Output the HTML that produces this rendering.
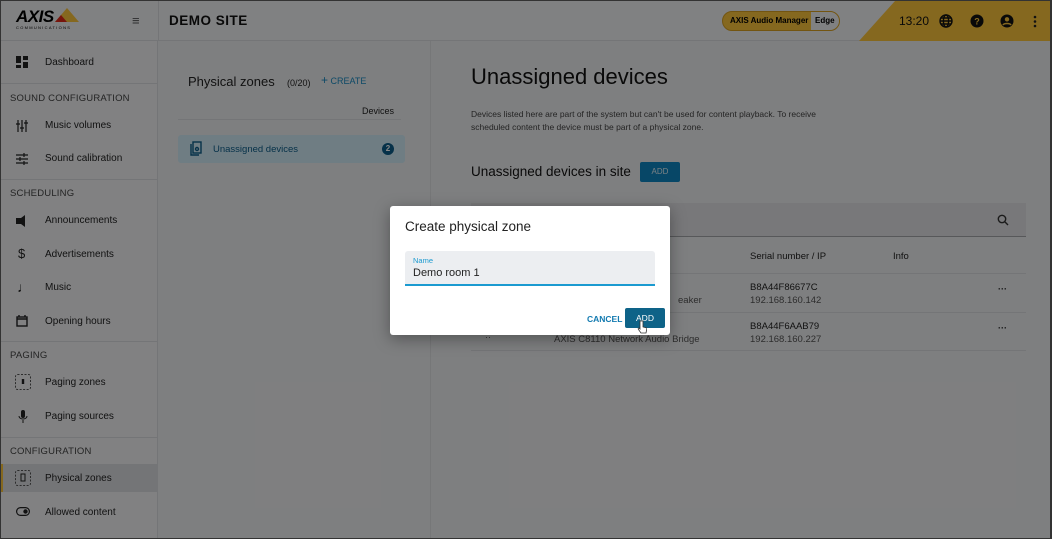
<!DOCTYPE html>
<html><head><meta charset="utf-8"><style>
*{box-sizing:border-box;margin:0;padding:0}
body{width:1052px;height:539px;overflow:hidden;background:#333;font-family:"Liberation Sans",sans-serif;color:#222;position:relative}
.a{position:absolute}
#app{position:absolute;left:1px;top:1px;width:1049px;height:537px;background:#eff0f2;overflow:hidden}
.hl{height:1px;background:#dcdde0}
.it{left:44px;font-size:10px;color:#222}
.sec{left:9px;font-size:9.5px;color:#444;letter-spacing:.2px}
.ic{left:15px;width:12px;height:12px}
#ov{position:absolute;left:0;top:0;width:1049px;height:537px;background:rgba(0,0,0,.47)}
</style></head><body>
<div id="app">
<!-- header -->
<div class="a" style="left:0;top:0;width:1049px;height:40px;background:#f2f3f5;border-bottom:1px solid #dcdde0"></div>
<svg class="a" style="left:858px;top:0" width="191" height="40"><polygon points="36,0 191,0 191,40 0,40" fill="#fcc53c"/></svg>
<div class="a" style="left:15px;top:6px;font-weight:bold;font-size:17px;font-style:italic;letter-spacing:-.5px;color:#000">AXIS</div>
<svg class="a" style="left:54px;top:7px" width="24" height="14"><polygon points="12,0 24,14 0,14" fill="#fcc53c"/><polygon points="6,7 12,14 0,14" fill="#e0281a"/></svg>
<div class="a" style="left:15px;top:24px;font-size:4px;letter-spacing:1.3px;color:#000">COMMUNICATIONS</div>
<div class="a" style="left:131px;top:12px;font-size:13px;color:#555">≡</div>
<div class="a" style="left:157px;top:0;width:1px;height:40px;background:#dcdde0"></div>
<div class="a" style="left:168px;top:12px;font-weight:bold;font-size:13.5px;letter-spacing:.5px;color:#111">DEMO SITE</div>
<div class="a" style="left:721px;top:10px;width:118px;height:20px;border-radius:10px;background:#fcc53c;border:1px solid #d9a020;overflow:hidden">
<div class="a" style="left:7px;top:4px;font-size:8px;font-weight:bold;color:#000">AXIS Audio Manager</div>
<div class="a" style="left:88px;top:0;width:30px;height:20px;background:#f2f3f5"></div>
<div class="a" style="left:92px;top:4px;font-size:8px;font-weight:bold;color:#000">Edge</div></div>
<div class="a" style="left:898px;top:13px;font-size:12px;color:#111">13:20</div>
<svg class="a" style="left:938px;top:13px" width="14" height="14" fill="none" stroke="#111" stroke-width="1.4"><circle cx="7" cy="7" r="6"/><ellipse cx="7" cy="7" rx="2.6" ry="6"/><path d="M1 7h12M2 4h10M2 10h10"/></svg>
<svg class="a" style="left:969px;top:13px" width="14" height="14"><circle cx="7" cy="7" r="6.5" fill="#111"/><text x="7" y="10.5" font-size="9" font-weight="bold" text-anchor="middle" fill="#fcc53c" font-family="Liberation Sans">?</text></svg>
<svg class="a" style="left:999px;top:13px" width="14" height="14"><circle cx="7" cy="7" r="6.5" fill="#111"/><circle cx="7" cy="5.3" r="2.2" fill="#fcc53c"/><path d="M3 11c1-2 7-2 8 0" stroke="#fcc53c" stroke-width="1.6" fill="none"/></svg>
<svg class="a" style="left:1032px;top:14px" width="4" height="13" fill="#222"><circle cx="2" cy="2" r="1.3"/><circle cx="2" cy="6.5" r="1.3"/><circle cx="2" cy="11" r="1.3"/></svg>

<!-- sidebar -->
<div class="a" style="left:0;top:40px;width:157px;height:497px;background:#f3f4f6;border-right:1px solid #dcdde0"></div>
<div class="a" style="left:0;top:463px;width:157px;height:28px;background:#dcdde1;border-left:2px solid #fcc53c"></div>
<svg class="a ic" style="top:55px" fill="#222"><rect x="0" y="0" width="5" height="7"/><rect x="7" y="0" width="5" height="4"/><rect x="0" y="9" width="5" height="3"/><rect x="7" y="6" width="5" height="6"/></svg>
<div class="a it" style="top:56px">Dashboard</div>
<div class="a hl" style="left:0;top:82px;width:157px"></div>
<div class="a sec" style="top:92px">SOUND CONFIGURATION</div>
<svg class="a ic" style="top:119px" stroke="#222" stroke-width="1.2"><path d="M2 0v12M6 0v12M10 0v12M0 4h4M4 8h4M8 3h4"/></svg>
<div class="a it" style="top:119px">Music volumes</div>
<svg class="a ic" style="top:152px" stroke="#222" stroke-width="1.2"><path d="M0 2h12M0 6h12M0 10h12M8 0v4M4 4v4M8 8v4"/></svg>
<div class="a it" style="top:152px">Sound calibration</div>
<div class="a hl" style="left:0;top:178px;width:157px"></div>
<div class="a sec" style="top:187px">SCHEDULING</div>
<svg class="a ic" style="top:214px" fill="#222"><path d="M0 3h5l4-3v12l-4-3H0z"/></svg>
<div class="a it" style="top:214px">Announcements</div>
<div class="a" style="left:17px;top:245px;font-size:13px;color:#222">$</div>
<div class="a it" style="top:248px">Advertisements</div>
<div class="a" style="left:16px;top:278px;font-size:14px;color:#222">♩</div>
<div class="a it" style="top:281px">Music</div>
<svg class="a ic" style="top:314px" fill="none" stroke="#222" stroke-width="1.4"><rect x="1" y="2" width="10" height="9"/><path d="M1 4h10M3 0v2M9 0v2"/></svg>
<div class="a it" style="top:315px">Opening hours</div>
<div class="a hl" style="left:0;top:340px;width:157px"></div>
<div class="a sec" style="top:349px">PAGING</div>
<svg class="a" style="left:14px;top:373px" width="16" height="16" fill="none" stroke="#555" stroke-dasharray="2 1.5"><rect x=".5" y=".5" width="15" height="15" rx="2"/><path d="M8 5v5" stroke="#222" stroke-width="2.4" stroke-dasharray="none"/></svg>
<div class="a it" style="top:376px">Paging zones</div>
<svg class="a" style="left:17px;top:409px" width="10" height="14" fill="#222"><rect x="3" y="0" width="4" height="8" rx="2"/><path d="M1 6c0 4 8 4 8 0M5 10v3" stroke="#222" fill="none"/></svg>
<div class="a it" style="top:410px">Paging sources</div>
<div class="a hl" style="left:0;top:436px;width:157px"></div>
<div class="a sec" style="top:445px">CONFIGURATION</div>
<svg class="a" style="left:14px;top:469px" width="16" height="16" fill="none" stroke="#555" stroke-dasharray="2 1.5"><rect x=".5" y=".5" width="15" height="15" rx="2"/><rect x="6" y="4" width="4" height="7" stroke="#222" stroke-dasharray="none"/></svg>
<div class="a it" style="top:472px">Physical zones</div>
<svg class="a" style="left:15px;top:506px" width="14" height="9"><rect x=".6" y=".6" width="12.8" height="7.8" rx="3.9" fill="none" stroke="#222" stroke-width="1.2"/><circle cx="9.5" cy="4.5" r="2.2" fill="#222"/></svg>
<div class="a it" style="top:506px">Allowed content</div>

<!-- zones column -->
<div class="a" style="left:429px;top:40px;width:1px;height:497px;background:#dfe0e3"></div>
<div class="a" style="left:187px;top:73px;font-size:13px;color:#222">Physical zones</div>
<div class="a" style="left:286px;top:77px;font-size:9px">(0/20)</div>
<div class="a" style="left:320px;top:75px;font-size:9px;color:#1a8cc2"><span style="font-size:12px;line-height:9px">+</span> CREATE</div>
<div class="a" style="left:361px;top:105px;font-size:9px">Devices</div>
<div class="a" style="left:177px;top:118px;width:223px;height:1px;background:#dcdde0"></div>
<div class="a" style="left:177px;top:134px;width:227px;height:28px;background:#d1ecf7;border-radius:3px"></div>
<svg class="a" style="left:189px;top:140px" width="12" height="15" fill="none" stroke="#0c5d8a" stroke-width="1.4"><rect x="3" y="1" width="8" height="11"/><path d="M1 3v11h8"/><circle cx="7" cy="8" r="1.5"/></svg>
<div class="a" style="left:212px;top:143px;font-size:9.5px;color:#0c5d8a">Unassigned devices</div>
<div class="a" style="left:381px;top:142px;width:12px;height:12px;border-radius:6px;background:#0c5d8a;color:#fff;font-size:8px;font-weight:bold;text-align:center;line-height:12px">2</div>

<!-- main -->
<div class="a" style="left:470px;top:63px;font-size:22px;color:#111">Unassigned devices</div>
<div class="a" style="left:470px;top:107px;font-size:8.5px;line-height:13px;color:#444;width:380px">Devices listed here are part of the system but can't be used for content playback. To receive scheduled content the device must be part of a physical zone.</div>
<div class="a" style="left:470px;top:163px;font-size:13.5px;color:#111">Unassigned devices in site</div>
<div class="a" style="left:639px;top:161px;width:40px;height:20px;background:#0e87c2;border-radius:2px;color:#e5f3fa;font-size:8px;text-align:center;line-height:20px">ADD</div>
<div class="a" style="left:470px;top:202px;width:555px;height:34px;background:#e2e3e6;border-bottom:1px solid #a5a6aa"></div>
<svg class="a" style="left:996px;top:213px" width="12" height="12" fill="none" stroke="#333" stroke-width="1.4"><circle cx="5" cy="5" r="3.7"/><path d="M7.8 7.8L11 11"/></svg>
<div class="a" style="left:749px;top:250px;font-size:9.5px">Serial number / IP</div>
<div class="a" style="left:892px;top:250px;font-size:9.5px">Info</div>
<div class="a" style="left:470px;top:272px;width:555px;height:1px;background:#dcdde0"></div>
<div class="a" style="left:749px;top:281px;font-size:9.5px">B8A44F86677C</div>
<div class="a" style="left:749px;top:294px;font-size:9.5px;color:#555">192.168.160.142</div>
<div class="a" style="left:677px;top:294px;font-size:9.5px;color:#555">eaker</div>
<div class="a" style="left:997px;top:283px;font-size:9px;font-weight:bold">···</div>
<div class="a" style="left:470px;top:311px;width:555px;height:1px;background:#dcdde0"></div>
<div class="a" style="left:749px;top:320px;font-size:9.5px">B8A44F6AAB79</div>
<div class="a" style="left:749px;top:333px;font-size:9.5px;color:#555">192.168.160.227</div>
<div class="a" style="left:553px;top:333px;font-size:9.5px;color:#555">AXIS C8110 Network Audio Bridge</div>
<div class="a" style="left:484px;top:331px;font-size:9px;color:#555">··</div>
<div class="a" style="left:997px;top:322px;font-size:9px;font-weight:bold">···</div>
<div class="a" style="left:470px;top:349px;width:555px;height:1px;background:#dcdde0"></div>

<div id="ov"></div>

<!-- dialog -->
<div class="a" style="left:389px;top:205px;width:280px;height:129px;background:#fff;border-radius:3px;box-shadow:0 4px 16px rgba(0,0,0,.35)">
<div class="a" style="left:15px;top:13px;font-size:13.5px;color:#222">Create physical zone</div>
<div class="a" style="left:15px;top:45px;width:250px;height:35px;background:#eceef1;border-bottom:2px solid #1b9ad0;border-radius:3px 3px 0 0">
<div class="a" style="left:8px;top:5px;font-size:7.5px;color:#1b9ad0">Name</div>
<div class="a" style="left:8px;top:16px;font-size:11px;color:#222">Demo room 1</div></div>
<div class="a" style="left:197px;top:108px;font-size:8.5px;color:#127ab0;font-weight:bold">CANCEL</div>
<div class="a" style="left:235px;top:102px;width:40px;height:20px;background:#0e6388;border-radius:2px;color:#fff;font-size:8.5px;text-align:center;line-height:20px">ADD</div>
<svg class="a" style="left:247px;top:114px" width="10" height="14"><path d="M3 1v8l-1-1c-1 0-1 1-.5 1.5L4 13h5l1-5-4-1V1z" fill="#fff" stroke="#333" stroke-width=".8"/></svg>
</div>
</div>
</body></html>
